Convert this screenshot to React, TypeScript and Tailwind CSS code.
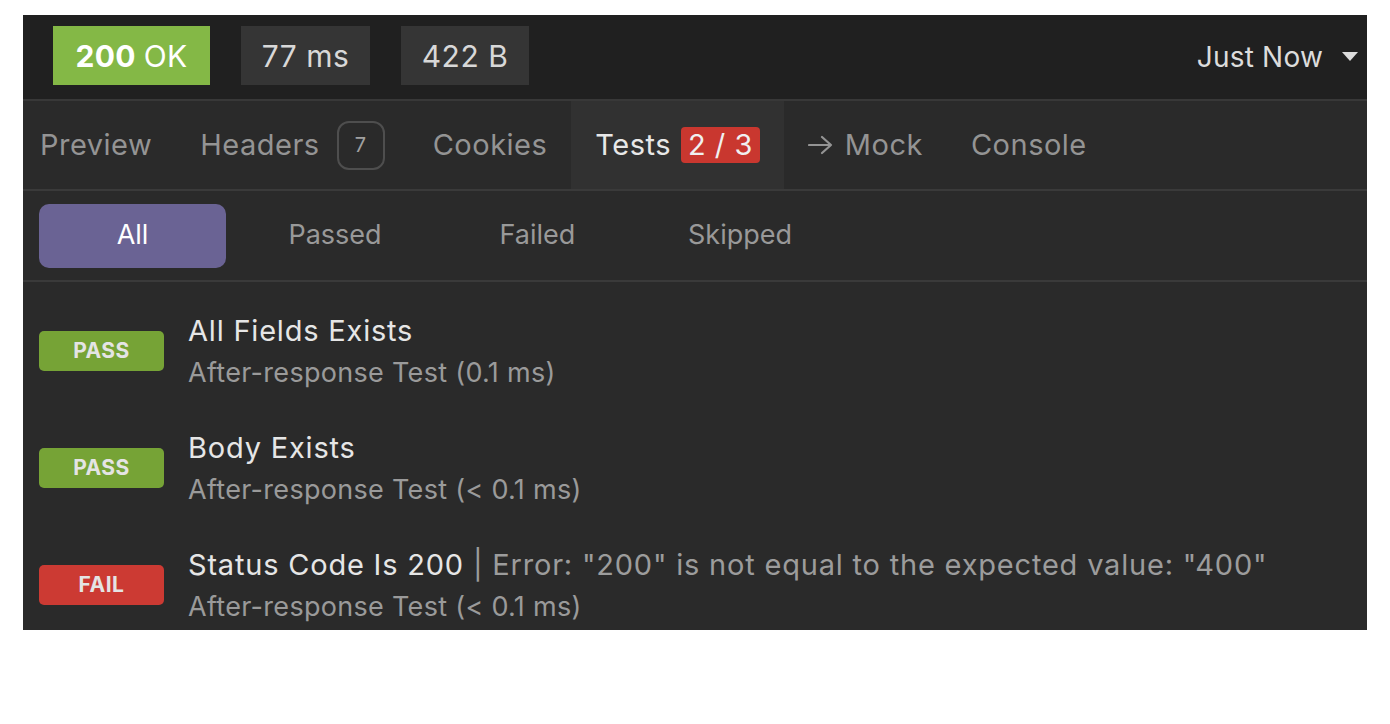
import React from "react";

const font = { fontFamily: "Inter, 'Noto Sans', sans-serif" };

function Badge({ kind }: { kind: "PASS" | "FAIL" }) {
  return (
    <div
      className={`w-[125px] h-[40px] shrink-0 rounded-[5px] flex items-center justify-center text-[21px] font-bold tracking-[0.5px] text-[#e4e4e4] ${
        kind === "PASS" ? "bg-[#76a336]" : "bg-[#cc3a33]"
      }`}
    >
      {kind}
    </div>
  );
}

function Row({
  kind,
  title,
  extra,
  sub,
}: {
  kind: "PASS" | "FAIL";
  title: string;
  extra?: string;
  sub: string;
}) {
  return (
    <div className="h-[117px] flex items-center pl-[16px] gap-[24px]">
      <Badge kind={kind} />
      <div className="flex flex-col">
        <div className="text-[29px] tracking-[0.8px] leading-[44px] text-[#e6e6e6] whitespace-nowrap">
          {title}
          {extra && <span className="text-[#9c9c9c]">{extra}</span>}
        </div>
        <div className="text-[27px] tracking-[0.3px] leading-[40px] text-[#9a9a9a] whitespace-nowrap">{sub}</div>
      </div>
    </div>
  );
}

export default function App() {
  return (
    <div className="min-h-[724px] w-[1390px] bg-white pt-[15px] pl-[23px]" style={font}>
      <div className="w-[1344px] h-[615px] overflow-hidden bg-[#2a2a2a] flex flex-col">
        {/* Top bar */}
        <div className="h-[86px] bg-[#202020] border-b-2 border-[#383838] flex items-start pt-[11px] pl-[30px] pr-[9px] shrink-0">
          <div className="h-[59px] w-[157px] bg-[#84b846] flex items-center justify-center text-[30px] tracking-[0.3px] text-white pt-[2px]">
            <span className="font-bold">200</span>
            <span className="ml-[8px]">OK</span>
          </div>
          <div className="ml-[31px] h-[59px] w-[129px] bg-[#353535] flex items-center justify-center text-[30px] tracking-[0.5px] text-[#d8d8d8] pt-[2px]">
            77 ms
          </div>
          <div className="ml-[31px] h-[59px] w-[128px] bg-[#353535] flex items-center justify-center text-[30px] tracking-[0.5px] text-[#d8d8d8] pt-[2px]">
            422 B
          </div>
          <div className="ml-auto h-[59px] flex items-center text-[28px] tracking-[0.2px] text-[#dcdcdc] pt-[2px]">
            Just Now
            <svg width="16" height="9" viewBox="0 0 16 9" className="ml-[19px]">
              <path d="M0 0 L16 0 L8 9 Z" fill="#dcdcdc" />
            </svg>
          </div>
        </div>

        {/* Tab bar */}
        <div className="h-[90px] bg-[#2a2a2a] border-b-2 border-[#3a3a3a] flex items-stretch shrink-0 -ml-[7px] text-[29px] tracking-[0.5px]">
          <div className="px-[24px] flex items-center text-[#949494]">Preview</div>
          <div className="px-[24px] flex items-center text-[#949494]">
            Headers
            <span className="ml-[17px] w-[48px] h-[49px] rounded-[12px] border-2 border-[#4e4e4e] flex items-center justify-center text-[20px] text-[#a0a0a0]">
              7
            </span>
          </div>
          <div className="px-[24px] flex items-center text-[#949494]">Cookies</div>
          <div className="px-[24px] flex items-center text-[#e8e8e8] bg-[#313131]">
            Tests
            <span className="ml-[10px] h-[36px] px-[7px] rounded-[4px] bg-[#c9372f] flex items-center justify-center text-[#f0f0f0]">
              2 / 3
            </span>
          </div>
          <div className="px-[24px] flex items-center text-[#949494]">
            <svg width="25" height="20" viewBox="0 0 25 20" className="mr-[12px]" fill="none">
              <path d="M1 10 H23 M14 2 L23 10 L14 18" stroke="#949494" strokeWidth="2.2" strokeLinecap="round" strokeLinejoin="round" />
            </svg>
            Mock
          </div>
          <div className="px-[24px] flex items-center text-[#949494]">Console</div>
        </div>

        {/* Filter bar */}
        <div className="h-[91px] border-b-2 border-[#3a3a3a] flex items-center pl-[16px] gap-[15.5px] shrink-0 text-[27px]">
          <div className="w-[187px] h-[64px] rounded-[10px] bg-[#6a6394] flex items-center justify-center text-white">
            All
          </div>
          <div className="w-[187px] h-[64px] flex items-center justify-center text-[#999999]">Passed</div>
          <div className="w-[187px] h-[64px] flex items-center justify-center text-[#999999]">Failed</div>
          <div className="w-[187px] h-[64px] flex items-center justify-center text-[#999999]">Skipped</div>
        </div>

        {/* List */}
        <div className="pt-[10px] flex flex-col">
          <Row kind="PASS" title="All Fields Exists" sub="After-response Test (0.1 ms)" />
          <Row kind="PASS" title="Body Exists" sub="After-response Test (< 0.1 ms)" />
          <Row
            kind="FAIL"
            title="Status Code Is 200"
            extra={' | Error: "200" is not equal to the expected value: "400"'}
            sub="After-response Test (< 0.1 ms)"
          />
        </div>
      </div>
    </div>
  );
}
